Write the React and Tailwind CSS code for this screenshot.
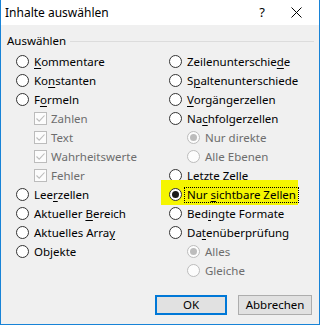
import React from 'react';

const LEFT = [
    {type: 'radio', label: 'Kommentare', u: 0},
    {type: 'radio', label: 'Konstanten', u: 2},
    {type: 'radio', label: 'Formeln', u: 1},
    {type: 'check', label: 'Zahlen'},
    {type: 'check', label: 'Text'},
    {type: 'check', label: 'Wahrheitswerte'},
    {type: 'check', label: 'Fehler'},
    {type: 'radio', label: 'Leerzellen', u: 3},
    {type: 'radio', label: 'Aktueller Bereich', u: 10},
    {type: 'radio', label: 'Aktuelles Array', u: 14},
    {type: 'radio', label: 'Objekte', u: 2},
];

const RIGHT = [
    {type: 'radio', label: 'Zeilenunterschiede', u: 16},
    {type: 'radio', label: 'Spaltenunterschiede', u: 1},
    {type: 'radio', label: 'Vorgängerzellen', u: 0},
    {type: 'radio', label: 'Nachfolgerzellen', u: 2},
    {type: 'sub', label: 'Nur direkte', checked: true},
    {type: 'sub', label: 'Alle Ebenen'},
    {type: 'radio', label: 'Letzte Zelle', u: 7},
    {type: 'radio', label: 'Nur sichtbare Zellen', u: 4, checked: true, focus: true},
    {type: 'radio', label: 'Bedingte Formate', u: 3},
    {type: 'radio', label: 'Datenüberprüfung', u: 2},
    {type: 'sub', label: 'Alles', checked: true},
    {type: 'sub', label: 'Gleiche'},
];

function Mnemonic({text, u}) {
    if (u === undefined) {
        return text;
    }
    return (
        <>
            {text.slice(0, u)}
            <span className="underline underline-offset-2">{text[u]}</span>
            {text.slice(u + 1)}
        </>
    );
}

function Radio({checked, disabled}) {
    return (
        <span
            className={
                'w-[13px] h-[13px] rounded-full border flex items-center justify-center shrink-0 ' +
                (disabled ? 'border-[#bcbcbc] bg-[#fcfcfc]' : 'border-[#333333] bg-white')
            }
        >
            {checked && (
                <span
                    className={
                        'w-[7px] h-[7px] rounded-full ' + (disabled ? 'bg-[#bcbcbc]' : 'bg-[#1a1a1a]')
                    }
                ></span>
            )}
        </span>
    );
}

function Check() {
    return (
        <span className="w-[13px] h-[13px] border border-[#bcbcbc] bg-[#fcfcfc] flex items-center justify-center shrink-0">
            <svg width="11" height="11" viewBox="0 0 11 11">
                <path d="M1.5 5.5 L4.2 8.2 L9.5 2.5" fill="none" stroke="#bcbcbc" strokeWidth="1.1" />
            </svg>
        </span>
    );
}

function Row({item}) {
    if (item.type === 'check') {
        return (
            <div className="h-[19px] flex items-center pl-[18px]">
                <Check />
                <span className="ml-[4px] text-[#6d6d6d]">{item.label}</span>
            </div>
        );
    }

    if (item.type === 'sub') {
        return (
            <div className="h-[19px] flex items-center pl-[18px]">
                <Radio checked={item.checked} disabled />
                <span className="ml-[5px] text-[#6d6d6d]">{item.label}</span>
            </div>
        );
    }

    return (
        <div className="h-[19px] flex items-center relative">
            {item.focus && (
                <span className="absolute -left-[8px] -top-[5px] w-[137px] h-[25px] bg-[#f5f500]"></span>
            )}
            <span className="relative flex items-center">
                <Radio checked={item.checked} />
                <span
                    className={
                        'ml-[3px] px-[2px] leading-[14px] ' +
                        (item.focus ? 'outline outline-1 outline-dotted outline-black' : '')
                    }
                >
                    <Mnemonic text={item.label} u={item.u} />
                </span>
            </span>
        </div>
    );
}

export default function App() {
    return (
        <div className="w-[320px] h-[325px] bg-[#f0f0f0] border-x border-b border-[#1883d7] flex flex-col font-['Noto_Sans',sans-serif] text-[11.5px] text-black select-none">
            <div className="h-[25px] bg-white flex items-center shrink-0">
                <span className="ml-[4px] text-[12px]">Inhalte auswählen</span>
                <span className="ml-auto mr-[26px] text-[13px]">?</span>
                <svg width="11" height="11" viewBox="0 0 11 11" className="mr-[17px]">
                    <path d="M0.5 0.5 L10.5 10.5 M10.5 0.5 L0.5 10.5" stroke="#000" strokeWidth="1" />
                </svg>
            </div>

            <div className="flex-1 flex flex-col">
                <div className="h-[16px] mt-[8px] flex items-center">
                    <span className="ml-[6px]">Auswählen</span>
                    <span className="flex-1 h-px bg-[#dcdcdc] ml-[4px] mr-[5px]"></span>
                </div>

                <div className="flex mt-[3px]">
                    <div className="w-[168px] pl-[15px]">
                        {LEFT.map(item => (
                            <Row key={item.label} item={item} />
                        ))}
                    </div>
                    <div className="flex-1">
                        {RIGHT.map(item => (
                            <Row key={item.label} item={item} />
                        ))}
                    </div>
                </div>

                <div className="mt-auto mb-[9px] mr-[7px] flex justify-end gap-[11px]">
                    <button className="w-[72px] h-[20px] bg-[#e1e1e1] border-2 border-[#0078d7] flex items-center justify-center">
                        OK
                    </button>
                    <button className="w-[74px] h-[20px] bg-[#e1e1e1] border border-[#adadad] flex items-center justify-center">
                        Abbrechen
                    </button>
                </div>
            </div>
        </div>
    );
}
